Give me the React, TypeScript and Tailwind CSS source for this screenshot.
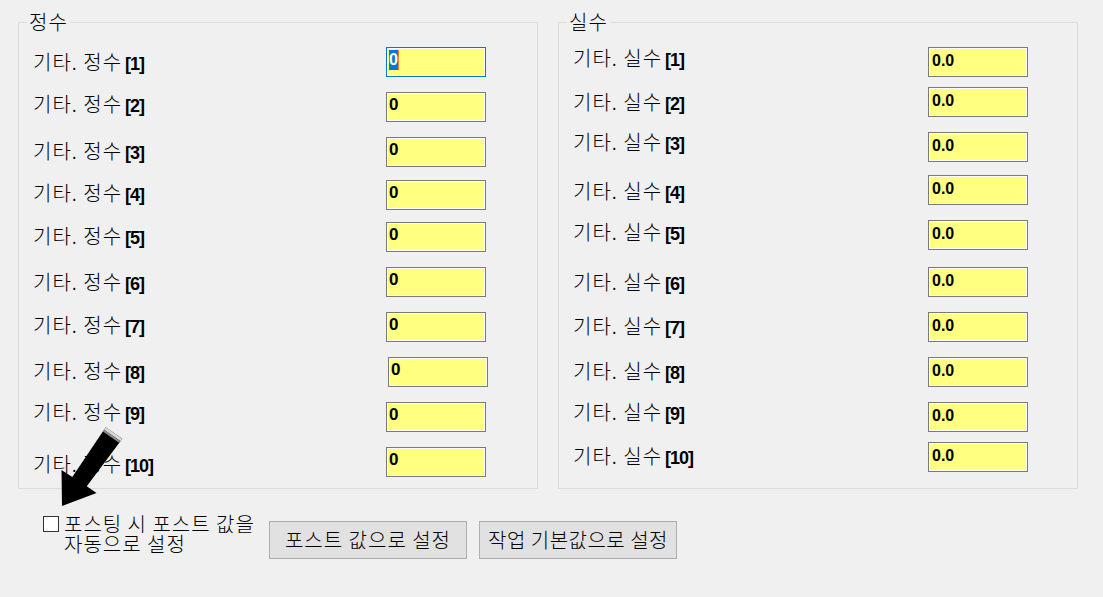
import React from "react";

type Row = { n: number; mt: string; lt: string; ml: string };

const leftRows: Row[] = [
  { n: 1, mt: "mt-[24px]", lt: "mt-[5px]", ml: "" },
  { n: 2, mt: "mt-[15px]", lt: "mt-[2px]", ml: "" },
  { n: 3, mt: "mt-[15px]", lt: "mt-[4px]", ml: "" },
  { n: 4, mt: "mt-[13px]", lt: "mt-[3px]", ml: "" },
  { n: 5, mt: "mt-[12px]", lt: "mt-[4px]", ml: "" },
  { n: 6, mt: "mt-[15px]", lt: "mt-[5px]", ml: "" },
  { n: 7, mt: "mt-[15px]", lt: "mt-[3px]", ml: "" },
  { n: 8, mt: "mt-[15px]", lt: "mt-[4px]", ml: "ml-[2px]" },
  { n: 9, mt: "mt-[15px]", lt: "mt-[0px]", ml: "" },
  { n: 10, mt: "mt-[15px]", lt: "mt-[7px]", ml: "" },
];

const rightRows: Row[] = [
  { n: 1, mt: "mt-[24px]", lt: "mt-[1px]", ml: "" },
  { n: 2, mt: "mt-[10px]", lt: "mt-[5px]", ml: "" },
  { n: 3, mt: "mt-[15px]", lt: "mt-[0px]", ml: "" },
  { n: 4, mt: "mt-[13px]", lt: "mt-[6px]", ml: "" },
  { n: 5, mt: "mt-[15px]", lt: "mt-[2px]", ml: "" },
  { n: 6, mt: "mt-[17px]", lt: "mt-[5px]", ml: "" },
  { n: 7, mt: "mt-[15px]", lt: "mt-[4px]", ml: "" },
  { n: 8, mt: "mt-[15px]", lt: "mt-[4px]", ml: "" },
  { n: 9, mt: "mt-[15px]", lt: "mt-[0px]", ml: "" },
  { n: 10, mt: "mt-[10px]", lt: "mt-[4px]", ml: "" },
];

const ko = "font-['Noto_Sans_CJK_KR',sans-serif] font-light";

function Label({ kind, n }: { kind: string; n: number }) {
  return (
    <span className="whitespace-nowrap leading-[20px] text-black">
      <span className={`${ko} text-[20px] tracking-[1px]`}>기타. {kind}</span>
      <span className="ml-[3px] font-['Liberation_Sans',sans-serif] text-[18px] font-bold tracking-[-1px]">
        [{n}]
      </span>
    </span>
  );
}

function Field({ value, selected, real }: { value: string; selected?: boolean; real?: boolean }) {
  return (
    <div
      className={`h-[30px] w-[100px] shrink-0 border bg-[#ffff80] pl-[2px] pt-[2px] shadow-[inset_0_0_0_1px_#ffffff] ${
        selected ? "border-[#0078d7]" : "border-[#7a7a7a]"
      }`}
    >
      {selected ? (
        <span className="flex h-[20px] items-start">
          <span className="flex h-[20px] w-[9px] justify-center bg-[#0078d7] font-['Liberation_Sans',sans-serif] text-[16px] font-bold leading-[20px] text-white">
            {value}
          </span>
          <span className="h-[20px] w-px bg-[#f08030]" />
        </span>
      ) : (
        <span
          className={`block font-['Liberation_Sans',sans-serif] font-bold leading-[20px] text-black ${
            real ? "pl-px pt-[1px] text-[16px]" : "text-[17px]"
          }`}
        >
          {value}
        </span>
      )}
    </div>
  );
}

function Group({
  title,
  kind,
  rows,
  labelW,
  real,
}: {
  title: string;
  kind: string;
  rows: Row[];
  labelW: string;
  real?: boolean;
}) {
  return (
    <div className="relative h-[467px] w-[520px] shrink-0 border border-[#dcdcdc]">
      <span
        className={`absolute left-[8px] top-[-11px] bg-[#f0f0f0] px-[2px] ${ko} text-[20px] leading-[20px] tracking-[1px] text-black`}
      >
        {title}
      </span>
      <div className="flex flex-col pl-[14px]">
        {rows.map((r) => (
          <div key={r.n} className={`flex h-[30px] items-start ${r.mt}`}>
            <div className={`${labelW} shrink-0 ${r.lt}`}>
              <Label kind={kind} n={r.n} />
            </div>
            <div className={r.ml}>
              <Field value={real ? "0.0" : "0"} real={real} selected={!real && r.n === 1} />
            </div>
          </div>
        ))}
      </div>
    </div>
  );
}

function Arrow() {
  return (
    <svg className="pointer-events-none absolute left-0 top-0" width="160" height="540" viewBox="0 0 160 540">
      <polygon
        points="122.3,438.7 105.7,427.3 72.3,476.9 61.5,470.1 62,506 96.5,492.9 86.8,486.3"
        fill="#000000"
      />
      <polygon points="122.3,438.7 105.7,427.3 104.0,429.8 120.6,441.2" fill="#d8d8d8" />
      <polygon points="120.6,441.2 104.0,429.8 102.8,431.5 119.4,442.9" fill="#8a8a8a" />
    </svg>
  );
}

export default function App() {
  return (
    <div className="relative h-[597px] w-[1103px] overflow-hidden bg-[#f0f0f0]">
      <div className="flex flex-col pl-[18px] pt-[22px]">
        <div className="flex gap-[20px]">
          <Group title="정수" kind="정수" rows={leftRows} labelW="w-[353px]" />
          <Group title="실수" kind="실수" rows={rightRows} labelW="w-[355px]" real />
        </div>
        <div className="ml-[25px] mt-[25px] flex items-start">
          <div className="flex w-[226px] items-start">
            <span className="mt-[2px] h-[16px] w-[16px] shrink-0 border border-[#333333] bg-white" />
            <span className={`ml-[5px] whitespace-nowrap ${ko} text-[20px] leading-[20px] tracking-[1px] text-black`}>
              포스팅 시 포스트 값을
              <br />
              자동으로 설정
            </span>
          </div>
          <div className="mt-[7px] flex gap-[12px]">
            <button
              className={`flex h-[38px] w-[198px] items-center justify-center border border-[#adadad] bg-[#e1e1e1] ${ko} text-[20px] leading-[20px] tracking-[1px] text-black`}
            >
              포스트 값으로 설정
            </button>
            <button
              className={`flex h-[38px] w-[198px] items-center justify-center border border-[#adadad] bg-[#e1e1e1] ${ko} text-[20px] leading-[20px] tracking-[0.5px] text-black`}
            >
              작업 기본값으로 설정
            </button>
          </div>
        </div>
      </div>
      <Arrow />
    </div>
  );
}
